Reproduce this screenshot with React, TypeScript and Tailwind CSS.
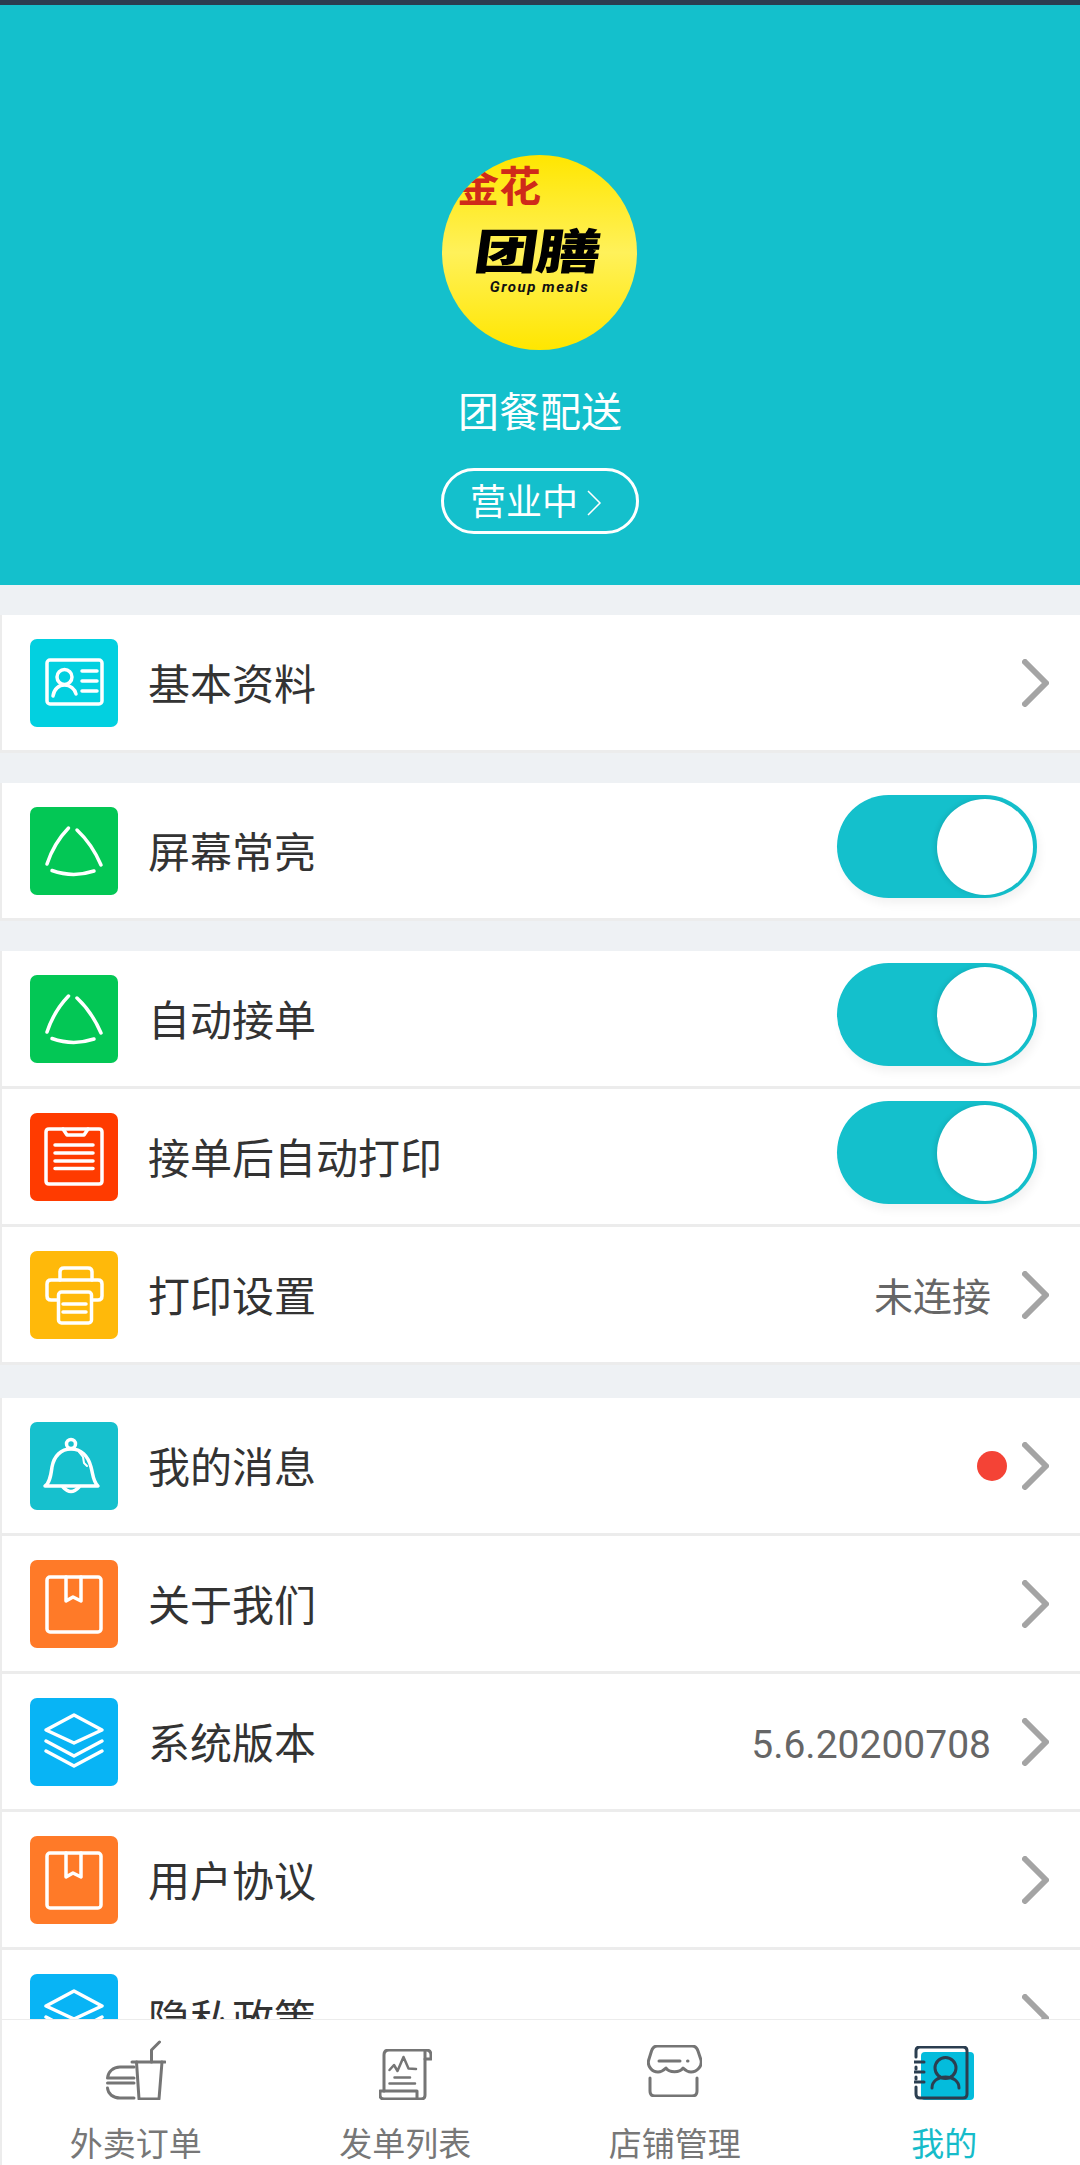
import React from 'react';

const IconBox = ({ color, children }: { color: string; children: React.ReactNode }) => (
  <div className={`h-[88px] w-[88px] shrink-0 rounded-[7px] ${color}`}>
    <svg viewBox="0 0 88 88" className="h-full w-full" fill="none" stroke="#ffffff" strokeWidth="3.5" strokeLinecap="round" strokeLinejoin="round">
      {children}
    </svg>
  </div>
);

const CardIcon = () => (
  <IconBox color="bg-[#02d0e0]">
    <rect x="17" y="21" width="55" height="44" rx="3" />
    <circle cx="34.5" cy="38" r="7.5" />
    <path d="M23 57c1-7 6-11 11.500-11S45 50 46 55" />
    <path d="M52 32h15M52 42h15M52 52h15" />
  </IconBox>
);

const TriangleIcon = () => (
  <IconBox color="bg-[#03c755]">
    <path d="M38.500 21Q24 36 17 57" />
    <path d="M47 23Q62 37 71 58" />
    <path d="M22 63.500Q43 71 64 64" />
  </IconBox>
);

const ClipboardIcon = () => (
  <IconBox color="bg-[#ff3b00]">
    <path d="M19 16h50q3 0 3 3v49q0 3-3 3H19q-3 0-3-3V19q0-3 3-3z" />
    <path d="M33 16l4 6h17l4-6" />
    <path d="M25 32h38M25 40h38M25 48h38M25 55.500h38" />
  </IconBox>
);

const PrinterIcon = () => (
  <IconBox color="bg-[#ffb90a]">
    <path d="M30 29v-8q0-4 4-4h24q4 0 4 4v8" />
    <path d="M28 49H21q-4 0-4-4V33q0-4 4-4h47q4 0 4 4v12q0 4-4 4h-6" />
    <rect x="28.500" y="41" width="33" height="31" rx="3" />
    <path d="M33 53h23M33 61h23" />
  </IconBox>
);

const BellIcon = () => (
  <IconBox color="bg-[#16c0cd]">
    <circle cx="41" cy="22" r="4.500" />
    <path d="M15 64c5-3 6-12 7-19 2-11 9-18 19-18s17 7 20 18c2 7 2 15 7 19z" />
    <path d="M33 65q8 9 16 0" />
    <path d="M49 30l4 5 1 6 3 3" strokeWidth="2" />
  </IconBox>
);

const BoxIcon = () => (
  <IconBox color="bg-[#ff7a28]">
    <rect x="17" y="17" width="54" height="55" rx="3" />
    <path d="M36 17v24l7-4 8 4V17" />
  </IconBox>
);

const LayersIcon = () => (
  <IconBox color="bg-[#08b4f5]">
    <path d="M44 17l28 15-28 13-28-13z" />
    <path d="M16 43l28 15 28-15" />
    <path d="M16 53l28 15 28-15" />
  </IconBox>
);

const Chevron = () => (
  <svg viewBox="0 0 27 48" className="h-12 w-[27px] shrink-0" fill="none" stroke="#a4a4a4" strokeWidth="6" strokeLinecap="round" strokeLinejoin="round">
    <path d="M3 3l21 21L3 45" />
  </svg>
);

const Toggle = () => (
  <div className="mb-2 mr-3 flex h-[103px] w-[200px] items-center justify-end rounded-full bg-[#14c0cc] pr-1 shadow-[3px_6px_10px_rgba(0,0,0,0.05)]">
    <div className="h-[96px] w-[96px] rounded-full bg-white shadow-[-2px_0_5px_rgba(0,0,0,0.1)]" />
  </div>
);

const Row = ({ icon, label, children }: { icon: React.ReactNode; label: string; children?: React.ReactNode }) => (
  <div className="flex h-[138px] items-center border-b-[3px] border-l-2 border-[#ececec] bg-white pl-7 pr-[31px]">
    {icon}
    <span className="ml-[30px] flex-1 pt-[6px] text-[42px] leading-[50px] text-[#333333]">{label}</span>
    {children}
  </div>
);

const RightText = ({ children }: { children: React.ReactNode }) => (
  <span className="mr-[31px] pt-[6px] text-[39px] leading-[46px] text-[#666666]">{children}</span>
);

const Logo = () => (
  <div className="-ml-px h-[195px] w-[195px] overflow-hidden rounded-full bg-[linear-gradient(180deg,#ffe600_0%,#fff15a_50%,#ffe600_100%)]">
    <div className="ml-[15px] mt-[9px] whitespace-nowrap text-[42px] font-bold leading-[48px] text-[#cf2a1a]">金花</div>
    <div className="mt-[13px] -translate-x-[3px] -skew-x-6 scale-y-75 whitespace-nowrap text-center text-[64px] font-black leading-[56px] tracking-[-2px] text-black">团膳</div>
    <div className="-mt-[2px] whitespace-nowrap text-center text-[15px] font-bold italic leading-[16px] tracking-[1.5px] text-[#111111]">Group meals</div>
  </div>
);

const FoodTab = () => (
  <svg viewBox="0 0 60 60" className="h-[60px] w-[60px]" fill="none" stroke="#757575" strokeWidth="3" strokeLinecap="round" strokeLinejoin="round">
    <path d="M53.500 2L45.500 10v12" />
    <path d="M26 22h33" />
    <path d="M30.500 22L33 59h20l3-37" />
    <path d="M28 27H14C7 27 2 32 1.500 38H28" />
    <path d="M1.500 43H28" />
    <path d="M1.500 48C2 54 7 58 14 58h14" />
  </svg>
);

const ReportTab = () => (
  <svg viewBox="0 0 53 51" className="h-[51px] w-[53px]" fill="none" stroke="#757575" strokeWidth="3" strokeLinecap="round" strokeLinejoin="round">
    <path d="M5 42V6q0-5 5-5h37q5 0 5 5v4h-6" />
    <path d="M46 1v45q0 4-4 4H5q-4 0-4-4v-4h37v8" />
    <path d="M10.500 21L15 16l3.500 6 6-14 5 11.500 7.500.5" strokeWidth="2.500" />
    <path d="M15.500 28.500H31M10.500 34.500H36" strokeWidth="2.500" />
  </svg>
);

const StoreTab = () => (
  <svg viewBox="0 0 55 52" className="mb-[3px] h-[52px] w-[55px]" fill="none" stroke="#757575" strokeWidth="3" strokeLinecap="round" strokeLinejoin="round">
    <path d="M10.500 1H45c3 0 5 2 6 5l3 9c1.500 6-4 12-10 12-3 0-6-2-8-4-3 5-14 5-17 0-2 2-5 4-8 4C5 27 0 21 1.700 15L4.500 6C5.500 3 7.500 1 10.500 1z" />
    <path d="M12 16h21M40.500 16h.5" />
    <path d="M3 33v13q0 5 5 5h37q5 0 5-5V33" />
  </svg>
);

const MineTab = () => (
  <svg viewBox="0 0 60 54" className="h-[54px] w-[60px]" fill="none" strokeLinecap="round" strokeLinejoin="round">
    <rect x="7" y="6" width="53" height="48" rx="4" fill="#04bcdc" />
    <g stroke="#2b3e50" strokeWidth="3">
      <path d="M2 11V5q0-4 4-4h43q4 0 4 4v43q0 4-4 4H6q-4 0-4-4V41" />
      <path d="M2 21v2M2 31v2" />
      <path d="M0.500 16H10M0.500 26H10M0.500 36H10" />
      <circle cx="31.500" cy="22" r="10.500" />
      <path d="M18 42c0-7 6-11 13.500-11S45 35 45 42" />
    </g>
  </svg>
);

const Tab = ({ icon, label, active }: { icon: React.ReactNode; label: string; active?: boolean }) => (
  <div className="flex flex-col items-center pr-[2px]">
    <div className="flex h-[84px] items-end pb-[4px]">{icon}</div>
    <span className={`mt-[21px] text-[33px] leading-[40px] ${active ? 'text-[#16bcca]' : 'text-[#777777]'}`}>{label}</span>
  </div>
);

const App = () => {
  return (
    <div className="flex h-[2165px] w-[1080px] flex-col overflow-hidden bg-[#eef1f4] font-['Roboto','Noto_Sans_CJK_SC',sans-serif]">
      <div className="h-[5px] shrink-0 bg-[#2b3e50]" />
      <div className="min-h-0 flex-1 overflow-hidden">
        <div className="flex h-[580px] flex-col items-center bg-[#14c0cc] pt-[150px]">
          <Logo />
          <div className="mt-[38px] text-[41px] leading-[50px] text-white">团餐配送</div>
          <div className="mt-[30px] flex h-[66px] w-[198px] items-center justify-center rounded-full border-[3px] border-[#ffffff] pr-2 pt-1 text-[36px] text-white">
            营业中
            <svg viewBox="0 0 16 28" className="ml-2 h-7 w-4" fill="none" stroke="#ffffff" strokeWidth="1.500">
              <path d="M2 2l12 12L2 26" />
            </svg>
          </div>
        </div>

        <div className="mt-[30px]">
          <Row icon={<CardIcon />} label="基本资料"><Chevron /></Row>
        </div>
        <div className="mt-[30px]">
          <Row icon={<TriangleIcon />} label="屏幕常亮"><Toggle /></Row>
        </div>
        <div className="mt-[30px]">
          <Row icon={<TriangleIcon />} label="自动接单"><Toggle /></Row>
          <Row icon={<ClipboardIcon />} label="接单后自动打印"><Toggle /></Row>
          <Row icon={<PrinterIcon />} label="打印设置">
            <RightText>未连接</RightText>
            <Chevron />
          </Row>
        </div>
        <div className="mt-[33px]">
          <Row icon={<BellIcon />} label="我的消息">
            <div className="mr-[15px] h-[30px] w-[30px] rounded-full bg-[#f44336]" />
            <Chevron />
          </Row>
          <Row icon={<BoxIcon />} label="关于我们"><Chevron /></Row>
          <Row icon={<LayersIcon />} label="系统版本">
            <RightText>5.6.20200708</RightText>
            <Chevron />
          </Row>
          <Row icon={<BoxIcon />} label="用户协议"><Chevron /></Row>
          <Row icon={<LayersIcon />} label="隐私政策"><Chevron /></Row>
        </div>
      </div>
      <div className="grid h-[146px] shrink-0 grid-cols-4 border-l-2 border-t border-[#ececec] bg-white">
        <Tab icon={<FoodTab />} label="外卖订单" />
        <Tab icon={<ReportTab />} label="发单列表" />
        <Tab icon={<StoreTab />} label="店铺管理" />
        <Tab icon={<MineTab />} label="我的" active />
      </div>
    </div>
  );
};

export default App;
